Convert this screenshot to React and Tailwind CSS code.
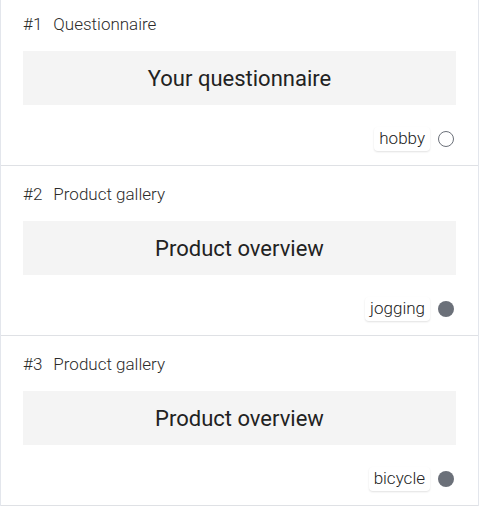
import React from "react";

const items = [
  { n: 1, title: "Questionnaire", box: "Your questionnaire", tag: "hobby", filled: false, first: true },
  { n: 2, title: "Product gallery", box: "Product overview", tag: "jogging", filled: true },
  { n: 3, title: "Product gallery", box: "Product overview", tag: "bicycle", filled: true },
];

export default function App() {
  return (
    <div className="w-[480px] h-[512px] bg-white overflow-hidden" style={{ fontFamily: "Roboto, 'Noto Sans', sans-serif" }}>
      <div className="w-[479px] border-x border-[#e3e6ec]">
        {items.map((it) => (
          <div
            key={it.n}
            className={`flex flex-col border-b border-[#dfe1e5] px-[22px] pb-[14px] ${it.first ? "pt-[15px]" : "pt-[19px]"}`}
          >
            <div className="flex items-center h-[20px] text-[17px] font-light text-[#2b2b2b]">
              <span>#{it.n}</span>
              <span className="ml-[11px]">{it.title}</span>
            </div>
            <div className="mt-[16px] h-[54px] bg-[#f4f4f4] flex items-center justify-center text-[22px] text-[#222]">
              {it.box}
            </div>
            <div className="mt-[22px] h-[24px] flex items-center justify-end gap-[8px] pr-[2px]">
              <span className="px-[5px] h-[24px] flex items-center rounded-[4px] bg-white text-[17px] font-light text-[#222] shadow-[0_1px_2px_rgba(0,0,0,0.12)]">
                {it.tag}
              </span>
              {it.filled ? (
                <span className="w-[16px] h-[16px] rounded-full bg-[#6b7079]" />
              ) : (
                <span className="w-[16px] h-[16px] rounded-full border-[1.5px] border-[#6b7079]" />
              )}
            </div>
          </div>
        ))}
      </div>
    </div>
  );
}
